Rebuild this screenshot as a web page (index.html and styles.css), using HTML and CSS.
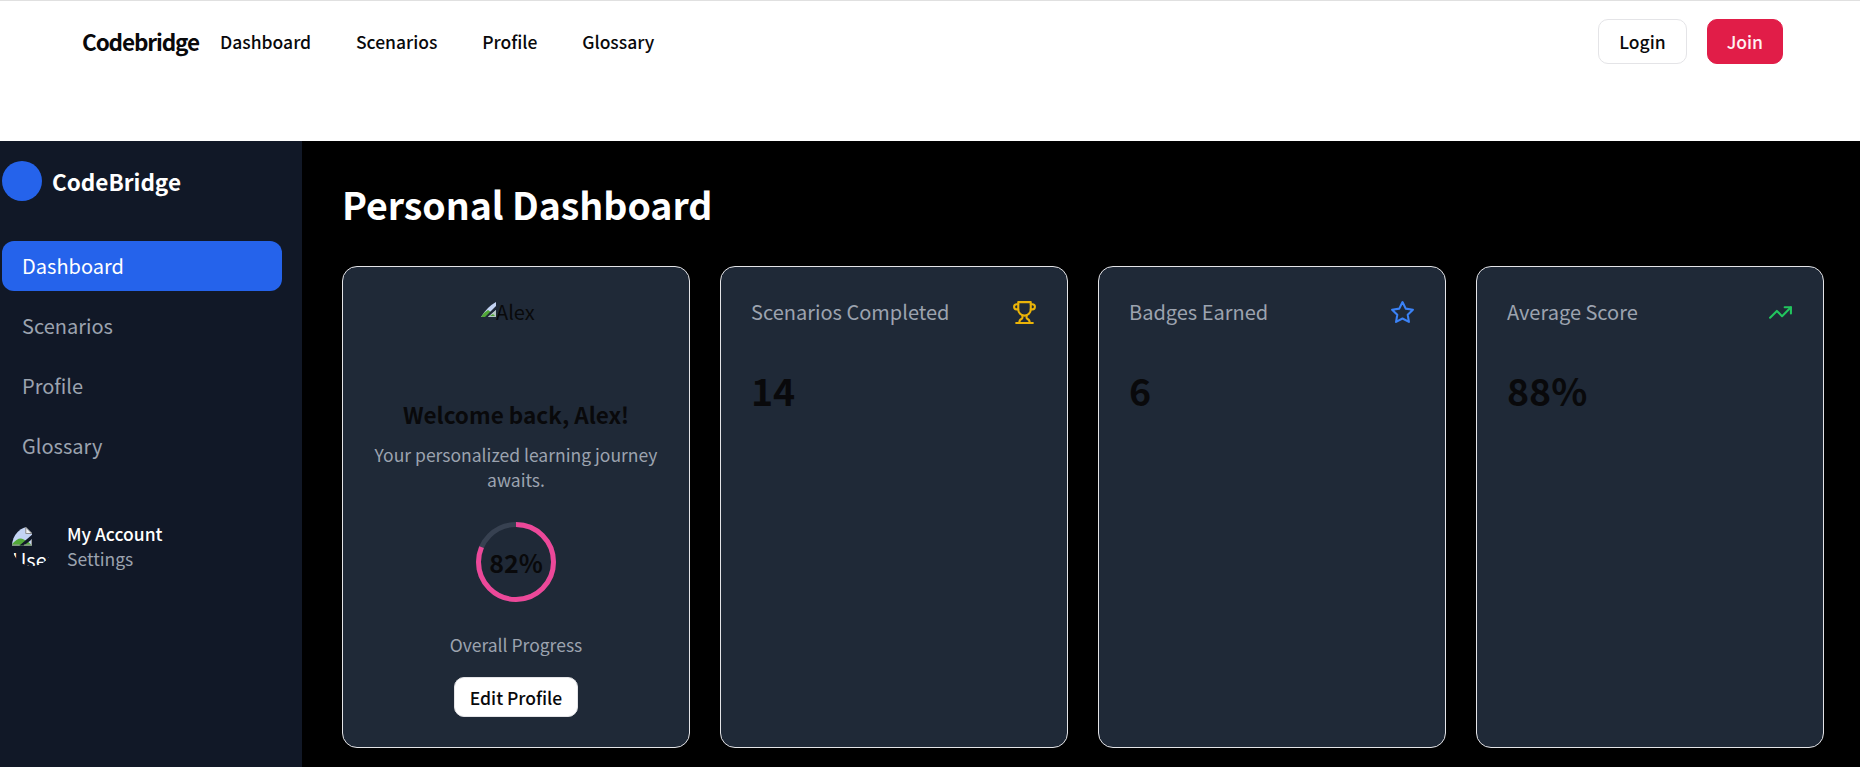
FILE: index.html
```html
<!DOCTYPE html>
<html lang="en">
<head>
<meta charset="utf-8">
<title>Codebridge</title>
<link rel="stylesheet" href="styles.css">
</head>
<body>
<header class="topbar">
  <a class="topbar-brand">Codebridge</a>
  <nav class="topnav"><a>Dashboard</a><a>Scenarios</a><a>Profile</a><a>Glossary</a></nav>
  <div class="topbar-actions"><a class="btn btn-outline">Login</a><a class="btn btn-primary">Join</a></div>
</header>
<div class="layout">
  <aside class="sidebar">
    <div class="brand"><span class="brand-dot"></span><span class="brand-name">CodeBridge</span></div>
    <nav class="sidenav"><a class="active">Dashboard</a><a>Scenarios</a><a>Profile</a><a>Glossary</a></nav>
    <div class="account">
      <div class="account-avatar">
        <svg class="broken" width="20" height="20" viewBox="0 0 16 16"><path d="M0 1h11l5 5v9.500H0z" fill="#c3d3f3"/><path d="M0 15.500v-1q5-6 9-4l4 2 3 3z" fill="#52a838"/><path d="M11 1v5h5z" fill="#eef0f2" stroke="#8c8c8c" stroke-width=".8"/><path d="M6 15.500L16 7v3.500L9.500 15.500z" fill="#111827"/><path d="M0 15.200h6M9.500 15.200H16M15.600 11v4" stroke="#9a9a9a" stroke-width=".8"/></svg>
        <span class="alt">User</span>
      </div>
      <div class="account-text"><span class="account-name">My Account</span><span class="account-link">Settings</span></div>
    </div>
  </aside>
  <main class="main">
    <h1>Personal Dashboard</h1>
    <div class="cards">
      <section class="card profile">
        <div class="avatar">
          <svg width="15" height="15" viewBox="0 0 15 15"><path d="M0 15Q6 5 15 0v15z" fill="#c3d3f3"/><path d="M0 15Q3 10 7 8l3 2-5 5z" fill="#52a838"/><path d="M4 15L15 4v4L7 15z" fill="#1f2937"/><path d="M7 15l8-7v7z" fill="#b5c6c0"/><path d="M9 14l3-2 2 2z" fill="#52a838"/></svg><span>Alex</span>
        </div>
        <h2>Welcome back, Alex!</h2>
        <p class="intro">Your personalized learning journey awaits.</p>
        <div class="ring">
          <svg width="80" height="80" viewBox="0 0 80 80" fill="none" stroke-width="5"><circle cx="40" cy="40" r="37.5" stroke="#374151"/><circle cx="40" cy="40" r="37.5" stroke="#ec4899" pathLength="100" stroke-dasharray="81.5 100" transform="rotate(-90 40 40)"/></svg>
          <span>82%</span>
        </div>
        <p class="caption">Overall Progress</p>
        <a class="edit">Edit Profile</a>
      </section>
      <section class="card">
        <div class="card-head"><span>Scenarios Completed</span>
          <svg class="icon gold" viewBox="0 0 24 24"><path d="M6 9H4.5a2.5 2.5 0 0 1 0-5H6"/><path d="M18 9h1.5a2.5 2.5 0 0 0 0-5H18"/><path d="M4 22h16"/><path d="M10 14.66V17c0 .55-.47.98-.97 1.21C7.85 18.75 7 20.24 7 22"/><path d="M14 14.66V17c0 .55.47.98.97 1.21C16.15 18.75 17 20.24 17 22"/><path d="M18 2H6v7a6 6 0 0 0 12 0V2Z"/></svg></div>
        <div class="value">14</div>
      </section>
      <section class="card">
        <div class="card-head"><span>Badges Earned</span>
          <svg class="icon blue" viewBox="0 0 24 24"><path d="M12 2l3.09 6.26L22 9.27l-5 4.87 1.18 6.88L12 17.77l-6.18 3.25L7 14.14 2 9.27l6.91-1.01z"/></svg></div>
        <div class="value">6</div>
      </section>
      <section class="card">
        <div class="card-head"><span>Average Score</span>
          <svg class="icon green" viewBox="0 0 24 24"><path d="M22 7l-8.5 8.5-5-5L2 17"/><path d="M16 7h6v6"/></svg></div>
        <div class="value">88%</div>
      </section>
    </div>
  </main>
</div>
</body>
</html>
```
FILE: styles.css
```css
* { box-sizing: border-box; }
body {
  margin: 0;
  height: 767px;
  overflow: hidden;
  display: flex;
  flex-direction: column;
  background: #fff;
  color: #09090b;
  font-family: "Noto Sans CJK SC", "Noto Sans", sans-serif;
  font-size: 20px;
  line-height: 30px;
}
h1, h2, p { margin: 0; }
.topbar {
  flex: none;
  height: 141px;
  border-top: 1px solid #e0e0e0;
  padding: 18px 77px 0 82px;
  display: flex;
  align-items: flex-start;
  font-size: 17.5px;
  font-weight: 500;
}
.topbar-brand { font-size: 22.5px; font-weight: 700; letter-spacing: -1.125px; line-height: 45px; width: 138px; }
.topnav { display: flex; gap: 44.8px; line-height: 45px; }
.topbar-actions { margin-left: auto; display: flex; gap: 20px; }
.btn { height: 45px; line-height: 43px; padding: 0 20px; border: 1px solid #e4e4e7; border-radius: 10px; }
.btn-primary { background: #e11d48; border-color: #e11d48; color: #fff1f2; padding: 0 19px; }
.layout { flex: 1; display: flex; background: #000; min-height: 0; }
.sidebar { width: 302px; background: #111827; padding: 20px 20px 0 2px; color: #fff; }
.brand { display: flex; align-items: center; gap: 10px; height: 40px; margin-bottom: 40px; }
.brand-dot { width: 40px; height: 40px; border-radius: 50%; background: #2563eb; }
.brand-name { font-size: 22.5px; font-weight: 700; line-height: 35px; padding-top: 1px; }
.sidenav { display: flex; flex-direction: column; gap: 10px; }
.sidenav a { height: 50px; padding: 10px 20px; border-radius: 12px; color: #9ca3af; }
.sidenav .active { background: #2563eb; color: #fff; }
.account { display: flex; align-items: center; margin: 50px 0 0 10px; height: 50px; }
.account-avatar { width: 40px; height: 40px; border-radius: 50%; overflow: hidden; margin-right: 15px; }
.broken { display: block; }
.alt { display: block; line-height: 30px; margin-top: -1px; }
.account-text { display: flex; flex-direction: column; font-size: 17.5px; line-height: 25px; }
.account-name { font-weight: 500; }
.account-link { color: #9ca3af; }
.main { flex: 1; padding: 40px 36px 0 40px; }
h1 { font-size: 37.5px; line-height: 45px; letter-spacing: -.05px; font-weight: 700; color: #fff; margin-bottom: 40px; }
.cards { display: grid; grid-template-columns: repeat(4, 1fr); gap: 30px; }
.card { height: 482px; padding: 30px; border: 1px solid #e4e4e7; border-radius: 15px; background: #1f2937; }
.card-head { display: flex; justify-content: space-between; align-items: center; color: #9ca3af; height: 30px; }
.icon { width: 25px; height: 25px; fill: none; stroke-width: 2; stroke-linecap: round; stroke-linejoin: round; }
.gold { stroke: #eab308; }
.blue { stroke: #3b82f6; }
.green { stroke: #22c55e; }
.value { font-size: 37.5px; font-weight: 700; line-height: 45px; margin-top: 40px; }
.profile { display: flex; flex-direction: column; align-items: center; text-align: center; }
.avatar { width: 100px; padding-left: 15px; height: 100px; display: flex; align-items: flex-start; }
.avatar svg { margin-top: 5px; }
h2 { font-size: 22.5px; line-height: 35px; font-weight: 700; }
.intro { font-size: 17.5px; line-height: 25px; color: #9ca3af; margin-top: 10px; }
.ring { display: grid; place-items: center; margin-top: 30px; }
.ring svg, .ring span { grid-area: 1 / 1; }
.ring span { font-size: 25px; font-weight: 700; }
.caption { font-size: 17.5px; line-height: 25px; color: #9ca3af; margin-top: 30px; }
.edit { width: 124px; height: 40px; border: 1px solid #e4e4e7; border-radius: 10px; background: #fff; font-size: 17.5px; font-weight: 500; line-height: 40px; margin-top: 20px; }
```
